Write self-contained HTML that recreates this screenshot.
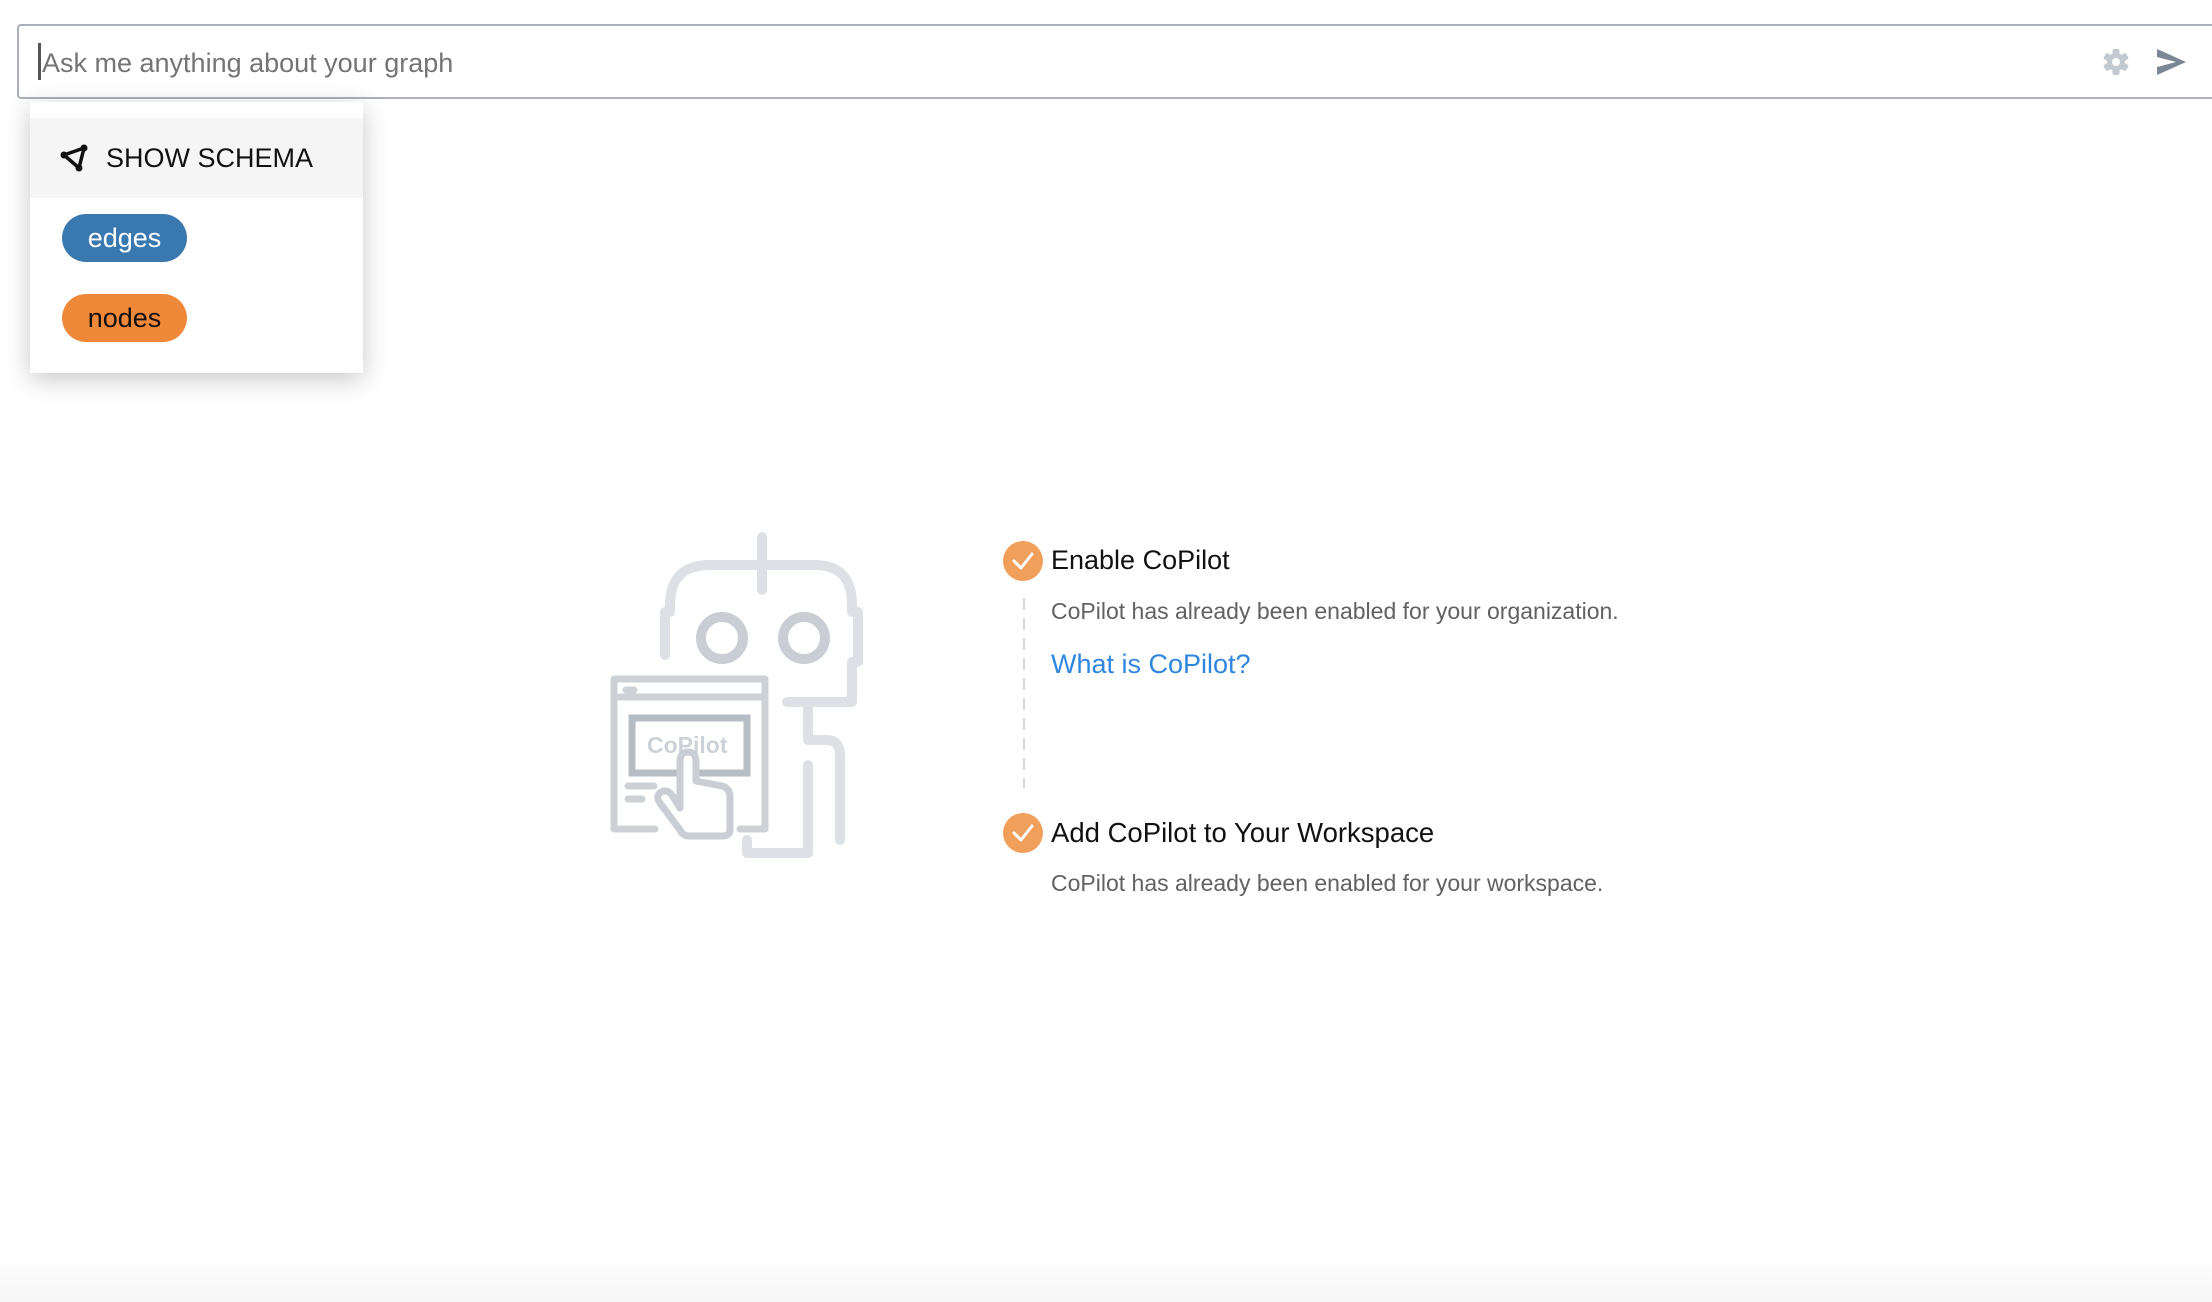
<!DOCTYPE html>
<html><head><meta charset="utf-8"><style>
html,body{margin:0;padding:0;width:2212px;height:1302px;overflow:hidden;background:#fff;font-family:"Liberation Sans",sans-serif;position:relative}
.inp{position:absolute;left:17px;top:24px;width:2200px;height:75px;border:2px solid #a9b2bc;border-radius:4px;box-sizing:border-box}
.ph{position:absolute;left:42px;top:45px;font-size:27px;color:#747474;line-height:36px}
.cur{position:absolute;left:38px;top:43px;width:3px;height:37px;background:#555}
.dd{position:absolute;left:30px;top:102px;width:333px;height:271px;background:#fff;box-shadow:0 6px 24px rgba(0,0,0,0.22)}
.hd{position:absolute;left:0;top:16px;width:333px;height:80px;background:#f5f5f5}
.hd span{position:absolute;left:76px;top:24px;font-size:27px;color:#111;line-height:32px}
.pill{position:absolute;left:32px;height:48px;border-radius:24px;font-size:27px;line-height:48px;text-align:center;width:125px}
.t{position:absolute;white-space:nowrap}
</style></head><body>
<div class="inp"></div>
<div class="cur"></div>
<div class="ph">Ask me anything about your graph</div>
<svg style="position:absolute;left:2100px;top:46px" width="90" height="32" viewBox="0 0 90 32">
 <g transform="translate(16,16)" fill="#c3c9d0">
  <circle r="9"/>
  <rect x="-3.5" y="-13" width="7" height="26" rx="2"/>
  <rect x="-3.5" y="-13" width="7" height="26" rx="2" transform="rotate(60)"/>
  <rect x="-3.5" y="-13" width="7" height="26" rx="2" transform="rotate(120)"/>
  <circle r="4" fill="#fff"/>
 </g>
 <path d="M57 3 L86 16 L57 29 L57 21 L76 16 L57 11 Z" fill="#7b8794"/>
</svg>
<div class="dd">
 <div class="hd">
  <svg style="position:absolute;left:30px;top:26px" width="30" height="28" viewBox="0 0 30 28">
   <path d="M4 11 L24 4 L19 24 Z" fill="none" stroke="#111" stroke-width="3.5" stroke-linejoin="round"/>
   <circle cx="4" cy="11" r="3.5" fill="#111"/><circle cx="24" cy="4" r="3.5" fill="#111"/><circle cx="19" cy="24" r="3.5" fill="#111"/>
  </svg>
  <span>SHOW SCHEMA</span>
 </div>
 <div class="pill" style="top:112px;background:#3a78b0;color:#fff">edges</div>
 <div class="pill" style="top:192px;background:#f0883a;color:#111">nodes</div>
</div>

<svg style="position:absolute;left:600px;top:520px" width="280" height="360" viewBox="600 520 280 360">
 <g fill="none" stroke="#dde1e5" stroke-width="10" stroke-linecap="round" stroke-linejoin="round">
  <path d="M762 537 L762 590"/>
  <path d="M665 655 L665 612 L670 612 L670 605 Q670 565 710 565 L815 565 Q852 565 852 605 L852 612 L858 612 L858 662 L852 662 L852 702 L787 702"/>
  <path d="M808 702 L808 740 L826 740 Q840 740 840 755 L840 840"/>
  <path d="M808 765 L808 853 L747 853 L747 840"/>
 </g>
 <g fill="none" stroke="#c9ced4" stroke-width="10">
  <circle cx="722" cy="638" r="21"/><circle cx="804" cy="638" r="21"/>
 </g>
 <g fill="none" stroke="#ccd1d6" stroke-width="7" stroke-linecap="round" stroke-linejoin="round">
  <path d="M655 829 L614 829 L614 679 L765 679 L765 829 L740 829"/>
  <path d="M614 697 L765 697"/>
  <path d="M626 690 L634 690"/>
  <path d="M628 786 L654 786"/><path d="M628 799 L642 799"/>
 </g>
 <rect x="632" y="718" width="115" height="55" fill="none" stroke="#b6bdc5" stroke-width="7"/>
 <text x="647" y="753" font-family="Liberation Sans,sans-serif" font-weight="bold" font-size="23" fill="#ccd2d8">CoPilot</text>
 <path d="M680 808 L680 762 Q680 752 688 752 Q696 752 696 762 L696 781 L722 786 Q730 788 730 798 L730 830 Q730 836 722 836 L689 836 Q683 836 680 830 L660 803 Q655 796 661 792 Q667 789 672 795 Z" fill="#fff" stroke="#c9ced4" stroke-width="7" stroke-linejoin="round"/>
</svg>

<svg style="position:absolute;left:999px;top:538px" width="60" height="320" viewBox="0 0 60 320">
 <circle cx="24" cy="23" r="20" fill="#f0a05a"/>
 <path d="M15 23 L22 30 L33 16" fill="none" stroke="#fff" stroke-width="3" stroke-linecap="round" stroke-linejoin="round"/>
 <line x1="25" y1="60" x2="25" y2="250" stroke="#d8d8d8" stroke-width="2" stroke-dasharray="12 8"/>
 <circle cx="24" cy="295" r="20" fill="#f0a05a"/>
 <path d="M15 295 L22 302 L33 288" fill="none" stroke="#fff" stroke-width="3" stroke-linecap="round" stroke-linejoin="round"/>
</svg>
<div class="t" style="left:1051px;top:545px;font-size:27px;color:#111">Enable CoPilot</div>
<div class="t" style="left:1051px;top:598px;font-size:23px;color:#616161">CoPilot has already been enabled for your organization.</div>
<div class="t" style="left:1051px;top:649px;font-size:27px;color:#2f86de">What is CoPilot?</div>
<div class="t" style="left:1051px;top:817px;font-size:27.5px;color:#111">Add CoPilot to Your Workspace</div>
<div class="t" style="left:1051px;top:870px;font-size:23px;color:#616161">CoPilot has already been enabled for your workspace.</div>
<div style="position:absolute;left:0;top:1255px;width:2212px;height:47px;background:linear-gradient(#fff,#f6f6f6)"></div>
</body></html>
